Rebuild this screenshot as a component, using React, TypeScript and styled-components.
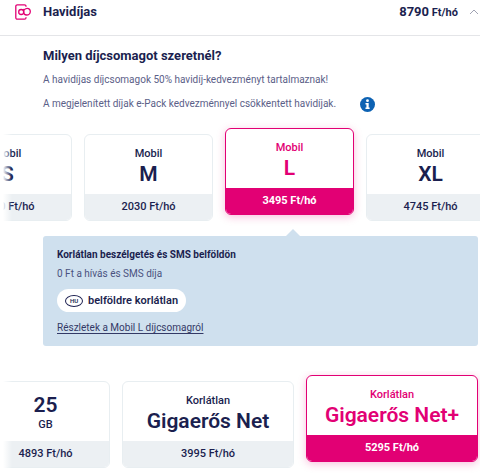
import React, { useState } from "react";
import styled, { createGlobalStyle, css } from "styled-components";

const NAVY = "#1b1f4f";
const MAGENTA = "#e20074";

const GlobalStyle = createGlobalStyle`
  *, *::before, *::after { box-sizing: border-box; }
  body {
    margin: 0;
    background: #fff;
    color: ${NAVY};
    font-family: Roboto, "Liberation Sans", sans-serif;
    font-size: 11px;
    line-height: 16px;
    overflow-x: hidden;
  }
  h2, h3, h4, p { margin: 0; }
`;

const Page = styled.main`
  display: flex;
  flex-direction: column;
`;

const Header = styled.button`
  display: flex;
  align-items: center;
  width: 100%;
  height: 36px;
  padding: 0 1px 11px 15px;
  border: 0;
  border-bottom: 1px solid #e4e5e8;
  background: #fff;
  color: inherit;
  font: inherit;
  text-align: left;
  cursor: pointer;
`;

const HeaderTitle = styled.span`
  flex: 1;
  margin-left: 12px;
  font-size: 13px;
  font-weight: 700;
`;

const Total = styled.span`
  margin-right: 11px;
  font-size: 11px;
  font-weight: 700;
`;

const TotalAmount = styled.span`
  font-size: 13px;
`;

const Intro = styled.section`
  display: flex;
  flex-direction: column;
  padding: 11px 0 0 43px;
`;

const Question = styled.h2`
  font-size: 13px;
  line-height: 18px;
  font-weight: 700;
`;

const Note = styled.p`
  display: flex;
  align-items: center;
  gap: 24px;
  margin-top: 6px;
  color: #5b6088;
  font-size: 10px;
  line-height: 18px;
  font-weight: 400;
`;

const InfoButton = styled.button`
  display: flex;
  padding: 0;
  border: 0;
  background: none;
  cursor: pointer;
`;

const Strip = styled.div<{ $shift: number; $top: number }>`
  position: relative;
  display: flex;
  gap: 12px;
  overflow: hidden;
  padding: ${(p) => p.$top}px 0 10px;

  & > :first-child {
    margin-left: -${(p) => p.$shift}px;
  }

  &::after {
    content: "";
    position: absolute;
    inset: 0 auto 0 0;
    width: 12px;
    background: linear-gradient(to right, #fff 3px, rgba(255, 255, 255, 0));
    pointer-events: none;
  }
`;

const Card = styled.button<{ $wide?: boolean; $selected: boolean }>`
  display: flex;
  flex-direction: column;
  flex: none;
  width: ${(p) => (p.$wide ? 172 : 129)}px;
  height: 87px;
  padding: 0;
  overflow: hidden;
  border: 1px solid #e8eef1;
  border-radius: 6px;
  background: #fff;
  color: ${NAVY};
  font: inherit;
  font-size: 11px;
  font-weight: 500;
  cursor: pointer;

  ${(p) =>
    p.$selected &&
    css`
      border-color: ${MAGENTA};
      color: ${MAGENTA};
      transform: translateY(-6px);
      box-shadow: 0 2px 8px rgba(226, 0, 116, 0.25);
    `}
`;

const CardBody = styled.span<{ $labelBelow?: boolean }>`
  display: flex;
  flex: 1;
  flex-direction: ${(p) => (p.$labelBelow ? "column-reverse" : "column")};
  align-items: center;
  justify-content: ${(p) => (p.$labelBelow ? "flex-end" : "flex-start")};
  width: 100%;
  padding-top: ${(p) => (p.$labelBelow ? 10 : 12)}px;
`;

const CardLabel = styled.span`
  line-height: 14px;
`;

const CardName = styled.span`
  font-size: 21px;
  font-weight: 600;
  line-height: 26px;
  white-space: nowrap;
`;

const CardPrice = styled.span<{ $selected: boolean }>`
  width: 100%;
  background: ${(p) => (p.$selected ? MAGENTA : "#ecf0f3")};
  color: ${(p) => (p.$selected ? "#fff" : NAVY)};
  font-weight: ${(p) => (p.$selected ? 700 : 500)};
  line-height: 26px;
  text-align: center;
`;

const Details = styled.section`
  position: relative;
  display: flex;
  flex-direction: column;
  align-items: flex-start;
  margin: 5px 2px 25px 43px;
  padding: 11px 14px 9px;
  border-radius: 3px;
  background: #cfe0ee;

  &::before {
    content: "";
    position: absolute;
    bottom: 100%;
    left: 243px;
    border: 7px solid transparent;
    border-top: 0;
    border-bottom-color: #cfe0ee;
  }
`;

const DetailsTitle = styled.h3`
  font-size: 10px;
  line-height: 16px;
  font-weight: 700;
`;

const DetailsText = styled.p`
  margin-top: 3px;
  color: #4a5280;
  font-size: 10px;
  font-weight: 400;
`;

const Pill = styled.span`
  display: flex;
  align-items: center;
  gap: 5px;
  height: 23px;
  margin: 7px 0;
  padding: 0 8px;
  border-radius: 12px;
  background: #fff;
  font-size: 11px;
  font-weight: 600;
`;

const CountryBadge = styled.span`
  width: 18px;
  height: 12px;
  border: 1px solid ${NAVY};
  border-radius: 50%;
  font-size: 6px;
  line-height: 10px;
  text-align: center;
`;

const DetailsLink = styled.a`
  color: #333966;
  font-size: 10px;
  line-height: 18px;
  font-weight: 400;
  text-decoration: underline;
  text-underline-offset: 2px;
`;

const PhoneAtIcon = () => (
  <svg width="16" height="16" viewBox="0 0 16 16" fill="none" stroke={MAGENTA} strokeWidth="1.3" strokeLinecap="round" aria-hidden="true">
    <path d="M11 2.300A1.500 1.500 0 0 0 9.500.8H2.300A1.500 1.500 0 0 0 .8 2.300v11.400a1.500 1.500 0 0 0 1.500 1.500h7.200a1.500 1.500 0 0 0 1.500-1.500" />
    <circle cx="6.200" cy="8" r="2.500" />
    <path d="M8.700 5.500V8.300c0 1.500 1.200 2.700 2.900 2.700 2.100 0 3.700-1.500 3.700-3.500 0-1.800-1.400-3.200-3.200-3.200-1.500 0-2.600.8-3.400 2.200" />
  </svg>
);

const ChevronIcon = () => (
  <svg width="10" height="10" viewBox="0 0 10 10" fill="none" stroke="#a0a3b3" strokeWidth="1" aria-hidden="true">
    <path d="M1 7l4-4 4 4" />
  </svg>
);

const InfoIcon = () => (
  <svg width="15" height="15" viewBox="0 0 14 14" aria-hidden="true">
    <circle cx="7" cy="7" r="7" fill="#0d62b3" />
    <circle cx="7" cy="3.400" r="1.300" fill="#fff" />
    <path d="M5.100 5.500h3v4.400h.9v1.400H5.100V9.900h.9V6.900h-.9z" fill="#fff" />
  </svg>
);

type Plan = { name: string; label: string; price: string; wide?: boolean; labelBelow?: boolean };

const mobilePlans: Plan[] = [
  { name: "S", label: "Mobil", price: "1500 Ft/hó" },
  { name: "M", label: "Mobil", price: "2030 Ft/hó" },
  { name: "L", label: "Mobil", price: "3495 Ft/hó" },
  { name: "XL", label: "Mobil", price: "4745 Ft/hó" },
];

const dataPlans: Plan[] = [
  { name: "25", label: "GB", price: "4893 Ft/hó", labelBelow: true },
  { name: "Gigaerős Net", label: "Korlátlan", price: "3995 Ft/hó", wide: true },
  { name: "Gigaerős Net+", label: "Korlátlan", price: "5295 Ft/hó", wide: true },
];

type PlanStripProps = {
  plans: Plan[];
  label: string;
  initial: string;
  shift: number;
  top: number;
};

const PlanStrip = ({ plans, label, initial, shift, top }: PlanStripProps) => {
  const [current, setCurrent] = useState(initial);
  return (
    <Strip role="group" aria-label={label} $shift={shift} $top={top}>
      {plans.map((plan) => {
        const selected = plan.name === current;
        return (
          <Card
            key={plan.name}
            type="button"
            aria-pressed={selected}
            $selected={selected}
            $wide={plan.wide}
            onClick={() => setCurrent(plan.name)}
          >
            <CardBody $labelBelow={plan.labelBelow}>
              <CardLabel>{plan.label}</CardLabel>
              <CardName>{plan.name}</CardName>
            </CardBody>
            <CardPrice $selected={selected}>{plan.price}</CardPrice>
          </Card>
        );
      })}
    </Strip>
  );
};

export default function App() {
  return (
    <Page>
      <GlobalStyle />
      <Header type="button" aria-expanded="true">
        <PhoneAtIcon />
        <HeaderTitle>Havidíjas</HeaderTitle>
        <Total>
          <TotalAmount>8790</TotalAmount> Ft/hó
        </Total>
        <ChevronIcon />
      </Header>
      <Intro>
        <Question>Milyen díjcsomagot szeretnél?</Question>
        <Note>A havidíjas díjcsomagok 50% havidíj-kedvezményt tartalmaznak!</Note>
        <Note>
          A megjelenített díjak e-Pack kedvezménnyel csökkentett havidíjak.
          <InfoButton type="button" aria-label="Információ">
            <InfoIcon />
          </InfoButton>
        </Note>
      </Intro>
      <PlanStrip plans={mobilePlans} label="Mobil" initial="L" shift={57} top={21} />
      <Details>
        <DetailsTitle>Korlátlan beszélgetés és SMS belföldön</DetailsTitle>
        <DetailsText>0 Ft a hívás és SMS díja</DetailsText>
        <Pill>
          <CountryBadge>HU</CountryBadge>
          belföldre korlátlan
        </Pill>
        <DetailsLink href="#mobil-l">Részletek a Mobil L díjcsomagról</DetailsLink>
      </Details>
      <PlanStrip plans={dataPlans} label="Mobilnet" initial="Gigaerős Net+" shift={19} top={10} />
    </Page>
  );
}
